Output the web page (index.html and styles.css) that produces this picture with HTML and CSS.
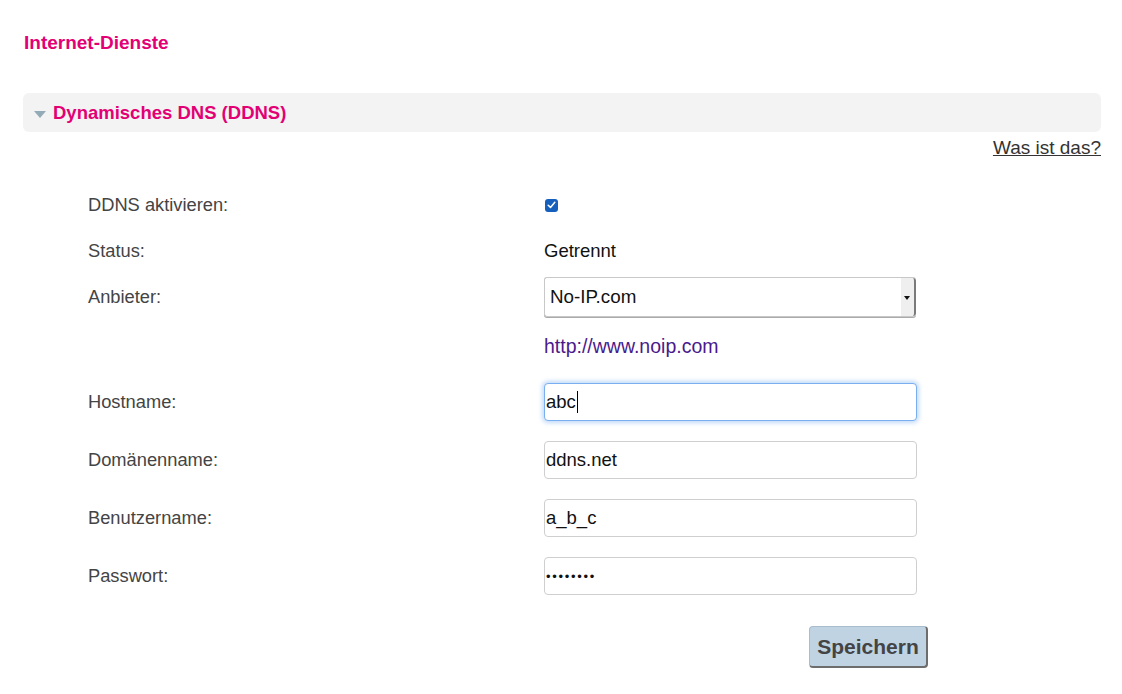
FILE: index.html
```html
<!DOCTYPE html>
<html lang="de">
<head>
<meta charset="utf-8">
<title>Internet-Dienste</title>
<link rel="stylesheet" href="styles.css">
</head>
<body>
<div class="page">
  <h1 class="page-title">Internet-Dienste</h1>
  <div class="section-head">
    <span class="tri"></span>
    <span class="section-title">Dynamisches DNS (DDNS)</span>
  </div>
  <div class="help-row"><a class="help" href="#">Was ist das?</a></div>
  <div class="form">
    <div class="row row-a">
      <div class="label">DDNS aktivieren:</div>
      <div class="value"><span class="check"><svg width="9" height="8" viewBox="0 0 9 8"><path d="M1.2 4.3 L3.5 6.4 L7.8 1.3" fill="none" stroke="#fff" stroke-width="1.5" stroke-linecap="round" stroke-linejoin="round"/></svg></span></div>
    </div>
    <div class="row row-a">
      <div class="label">Status:</div>
      <div class="value text">Getrennt</div>
    </div>
    <div class="row row-a">
      <div class="label">Anbieter:</div>
      <div class="value">
        <div class="select">
          <span class="select-text">No-IP.com</span>
          <span class="select-btn"><span class="arrow"></span></span>
        </div>
      </div>
    </div>
    <div class="row row-link">
      <div class="label"></div>
      <div class="value"><a class="link" href="#">http://www.noip.com</a></div>
    </div>
    <div class="row row-i">
      <div class="label">Hostname:</div>
      <div class="value"><div class="input focus">abc<span class="caret"></span></div></div>
    </div>
    <div class="row row-i">
      <div class="label">Domänenname:</div>
      <div class="value"><div class="input">ddns.net</div></div>
    </div>
    <div class="row row-i">
      <div class="label">Benutzername:</div>
      <div class="value"><div class="input">a_b_c</div></div>
    </div>
    <div class="row row-i">
      <div class="label">Passwort:</div>
      <div class="value"><div class="input pw">••••••••</div></div>
    </div>
    <div class="actions">
      <button class="save" type="button">Speichern</button>
    </div>
  </div>
</div>
</body>
</html>
```

FILE: styles.css
```css
* { box-sizing: border-box; }
html, body { margin: 0; padding: 0; background: #fff; }
body {
  font-family: "Liberation Sans", Arial, Helvetica, sans-serif;
  color: #444;
}
.page {
  width: 1122px;
  padding: 33px 21px 0 23px;
}
.page-title {
  margin: 0 0 0 1px;
  font-size: 19px;
  line-height: 20px;
  font-weight: bold;
  color: #e20074;
}
.section-head {
  margin-top: 40px;
  height: 39px;
  background: #f3f3f3;
  border-radius: 6px;
  display: flex;
  align-items: center;
  padding-left: 11px;
}
.tri {
  width: 0; height: 0;
  border-left: 6.5px solid transparent;
  border-right: 6.5px solid transparent;
  border-top: 7px solid #93aab7;
  margin-top: 3px;
  margin-right: 7px;
}
.section-title {
  font-size: 18.5px;
  font-weight: bold;
  color: #e20074;
  line-height: 22px;
}
.help-row {
  display: flex;
  justify-content: flex-end;
  margin-top: 5px;
  height: 22px;
}
.help {
  color: #333;
  font-size: 19px;
  line-height: 22px;
  text-decoration: underline;
}
.form {
  margin-top: 23px;
  padding-left: 65px;
}
.row {
  display: flex;
  align-items: center;
}
.row-a { height: 46px; }
.row-link { height: 53px; }
.row-i { height: 58px; }
.label {
  width: 456px;
  font-size: 18.3px;
  color: #444;
}
.value { display: flex; align-items: center; }
.text { font-size: 18.5px; color: #111; }
.check {
  width: 13px; height: 13px;
  margin-left: 1px;
  background: #1560bd;
  border-radius: 3px;
  display: flex;
  align-items: center;
  justify-content: center;
}
.select {
  width: 372px;
  height: 40px;
  border: 1px solid #c8c8c8;
  border-right: none;
  border-radius: 3px;
  display: flex;
  align-items: stretch;
  background: #fff;
  box-shadow: 0 1px 0 #aaa;
}
.select-text {
  flex: 1;
  display: flex;
  align-items: center;
  padding-left: 5px;
  font-size: 18.8px;
  color: #111;
}
.select-btn {
  width: 15px;
  background: #efefef;
  border-right: 2px solid #7a7a7a;
  border-radius: 0 3px 3px 0;
  display: flex;
  align-items: center;
  justify-content: center;
}
.arrow {
  width: 0; height: 0;
  border-left: 3px solid transparent;
  border-right: 3px solid transparent;
  border-top: 4px solid #111;
  margin-top: 1px;
  margin-left: -2px;
}
.link {
  font-size: 19.5px;
  color: #4a1a8b;
  text-decoration: none;
}
.input {
  width: 373px;
  height: 38px;
  border: 1px solid #cfcfcf;
  border-radius: 4px;
  display: flex;
  align-items: center;
  padding-left: 1px;
  font-size: 18.5px;
  color: #111;
  background: #fff;
}
.input.focus {
  border-color: #79aef0;
  box-shadow: 0 0 4px 2px rgba(120, 175, 240, 0.45);
}
.caret {
  display: inline-block;
  width: 1px;
  height: 22px;
  background: #000;
  margin-left: 1px;
}
.pw { font-size: 13px; letter-spacing: 1.7px; }
.actions {
  display: flex;
  justify-content: flex-end;
  width: 840px;
  margin-top: 21px;
}
.save {
  width: 119px;
  height: 42px;
  background: #bfd3e3;
  border: 1px solid #a9bccb;
  border-right: 2px solid #6d6d6d;
  border-bottom: 2px solid #6d6d6d;
  border-radius: 4px;
  font-family: "Liberation Sans", Arial, sans-serif;
  font-weight: bold;
  font-size: 21px;
  color: #444;
  padding: 0;
}
```
